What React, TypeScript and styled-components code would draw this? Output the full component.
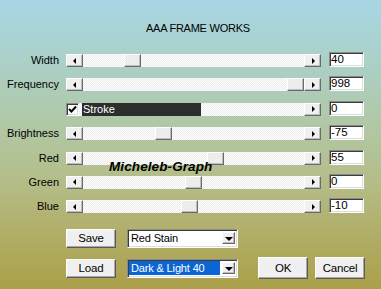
import React from "react";
import styled, { createGlobalStyle, css } from "styled-components";

const GlobalStyle = createGlobalStyle`
  html, body { margin: 0; padding: 0; }
  body { font-family: "Liberation Sans", Arial, sans-serif; background: #aba04a; }
`;

const FONT = `"Liberation Sans", Arial, sans-serif`;

const raised = css`
  box-sizing: border-box;
  border: 1px solid;
  border-color: #ffffff #6a6a6a #6a6a6a #ffffff;
  box-shadow: inset -1px -1px #bdbdbd;
`;

const sunken = css`
  box-sizing: border-box;
  border: 1px solid;
  border-color: #8a8a8a #ffffff #ffffff #8a8a8a;
  box-shadow: inset 1px 1px #3c3c3c, inset -1px -1px #dcdcdc;
  background: #ffffff;
`;

const Dialog = styled.div`
  position: relative;
  width: 381px;
  height: 289px;
  box-sizing: border-box;
  padding-top: 22px;
  overflow: hidden;
  font-family: ${FONT};
  color: #000;
  background: linear-gradient(
    to bottom,
    #a8d6e4 0%,
    #abd0c6 22%,
    #b1c7a3 45%,
    #b4bc86 64%,
    #b1ad66 82%,
    #aba04a 100%
  );
`;

const Title = styled.div`
  height: 13px;
  line-height: 13px;
  font-size: 11px;
  letter-spacing: -0.25px;
  padding-left: 146px;
  white-space: nowrap;
`;

const Rows = styled.div`
  margin-top: 17px;
  display: grid;
  grid-template-columns: 66px 255px 43px;
  grid-auto-rows: 24.4px;
  align-items: start;
`;

const Label = styled.div`
  margin-top: 2px;
  height: 13px;
  line-height: 13px;
  font-size: 11px;
  text-align: right;
  padding-right: 7px;
  white-space: nowrap;
`;

const SliderBar = styled.div`
  margin-top: 2px;
  height: 13px;
  display: flex;
  background-color: #ffffff;
  background-image: repeating-conic-gradient(#ebebeb 0 25%, #ffffff 0 50%);
  background-size: 2px 2px;
`;

const ArrowButton = styled.div`
  ${raised};
  width: 17px;
  height: 13px;
  flex: none;
  background: #f0f0f0;
  display: flex;
  align-items: center;
  justify-content: center;
`;

const Arrow = styled.span<{ $dir: "left" | "right" }>`
  width: 0;
  height: 0;
  border-top: 3px solid transparent;
  border-bottom: 3px solid transparent;
  ${(p) =>
    p.$dir === "left"
      ? css`border-right: 3px solid #000; margin-right: 1px;`
      : css`border-left: 3px solid #000; margin-left: 1px;`}
`;

const Track = styled.div`
  position: relative;
  flex: 1;
`;

const Thumb = styled.div`
  ${raised};
  position: absolute;
  top: 0;
  width: 17px;
  height: 13px;
  background: #ededed;
`;

const ValueBox = styled.div`
  ${sunken};
  margin-left: 8px;
  width: 35px;
  height: 15px;
  font-size: 11.5px;
  line-height: 13px;
  padding-left: 1px;
  white-space: nowrap;
`;

const CheckBox = styled.div`
  ${sunken};
  width: 13px;
  height: 13px;
  flex: none;
  display: flex;
  align-items: center;
  justify-content: center;
`;

const StrokeBar = styled.div`
  width: 119px;
  flex: none;
  margin-left: 3px;
  background: #2d2d2d;
  color: #ffffff;
  font-size: 11px;
  line-height: 13px;
  padding-left: 1px;
  box-sizing: border-box;
`;

const Watermark = styled.div`
  position: absolute;
  left: 109px;
  top: 160px;
  font-family: ${FONT};
  font-weight: 700;
  font-style: italic;
  font-size: 13.5px;
  line-height: 1;
  letter-spacing: 0.1px;
  color: #000;
  white-space: nowrap;
  pointer-events: none;
`;

const Bottom = styled.div`
  margin-top: 6.2px;
  padding-left: 66px;
  display: flex;
`;

const LeftGrid = styled.div`
  display: grid;
  grid-template-columns: 50px 111px;
  grid-template-rows: 19px 19px;
  column-gap: 11px;
  row-gap: 11px;
`;

const Actions = styled.div`
  display: flex;
  gap: 7px;
  margin-left: 20px;
  align-self: flex-end;
  margin-bottom: -1px;
`;

const PushButton = styled.button<{ $h: number }>`
  width: 50px;
  height: ${(p) => p.$h}px;
  margin: 0;
  padding: 0;
  box-sizing: border-box;
  font-family: ${FONT};
  font-size: 11.5px;
  letter-spacing: -0.2px;
  color: #000;
  background: #f0f0f0;
  border: 1px solid;
  border-color: #ffffff #5a5a5a #5a5a5a #ffffff;
  box-shadow: inset -1px -1px #a8a8a8;
  cursor: default;
`;

const Combo = styled.div`
  ${sunken};
  width: 111px;
  height: 19px;
  padding: 0 2px 0 1px;
  display: flex;
  align-items: center;
  gap: 2px;
`;

const ComboText = styled.div<{ $selected?: boolean }>`
  flex: 1;
  height: 14px;
  line-height: 14px;
  font-size: 11px;
  letter-spacing: -0.15px;
  padding-left: 2px;
  white-space: nowrap;
  overflow: hidden;
  background: ${(p) => (p.$selected ? "#0b66d4" : "transparent")};
  color: ${(p) => (p.$selected ? "#ffffff" : "#000000")};
`;

const DropButton = styled.div`
  ${raised};
  width: 13px;
  height: 12px;
  flex: none;
  background: #f0f0f0;
  display: flex;
  align-items: center;
  justify-content: center;
`;

const DownArrow = styled.span`
  width: 0;
  height: 0;
  border-left: 4px solid transparent;
  border-right: 4px solid transparent;
  border-top: 4px solid #000;
  margin-top: 1px;
`;

const INNER = 255 - 34 - 17;

function Slider({ value, min, max }: { value: number; min: number; max: number }) {
  const left = Math.round(((value - min) / (max - min)) * INNER);
  return (
    <SliderBar>
      <ArrowButton>
        <Arrow $dir="left" />
      </ArrowButton>
      <Track>
        <Thumb style={{ left }} />
      </Track>
      <ArrowButton>
        <Arrow $dir="right" />
      </ArrowButton>
    </SliderBar>
  );
}

function CheckMark() {
  return (
    <svg width="9" height="9" viewBox="0 0 9 9">
      <polyline points="1,4 3.5,6.5 8,1.5" fill="none" stroke="#000" strokeWidth="2" />
    </svg>
  );
}

const rows = [
  { label: "Width", value: 40, min: 0, max: 200 },
  { label: "Frequency", value: 998, min: 0, max: 1000 },
  { label: "Stroke", value: 0, min: 0, max: 1, check: true },
  { label: "Brightness", value: -75, min: -255, max: 255 },
  { label: "Red", value: 55, min: -255, max: 255 },
  { label: "Green", value: 0, min: -255, max: 255 },
  { label: "Blue", value: -10, min: -255, max: 255 },
];

export default function App() {
  return (
    <>
      <GlobalStyle />
      <Dialog>
        <Title>AAA FRAME WORKS</Title>
        <Rows>
          {rows.map((r) => (
            <React.Fragment key={r.label}>
              <Label>{r.check ? "" : r.label}</Label>
              {r.check ? (
                <SliderBar>
                  <CheckBox>
                    <CheckMark />
                  </CheckBox>
                  <StrokeBar>{r.label}</StrokeBar>
                  <Track />
                  <ArrowButton>
                    <Arrow $dir="right" />
                  </ArrowButton>
                </SliderBar>
              ) : (
                <Slider value={r.value} min={r.min} max={r.max} />
              )}
              <ValueBox>{r.value}</ValueBox>
            </React.Fragment>
          ))}
        </Rows>
        <Bottom>
          <LeftGrid>
            <PushButton $h={19}>Save</PushButton>
            <Combo>
              <ComboText>Red Stain</ComboText>
              <DropButton>
                <DownArrow />
              </DropButton>
            </Combo>
            <PushButton $h={19}>Load</PushButton>
            <Combo>
              <ComboText $selected>Dark &amp; Light 40</ComboText>
              <DropButton>
                <DownArrow />
              </DropButton>
            </Combo>
          </LeftGrid>
          <Actions>
            <PushButton $h={22}>OK</PushButton>
            <PushButton $h={22}>Cancel</PushButton>
          </Actions>
        </Bottom>
        <Watermark>Micheleb-Graph</Watermark>
      </Dialog>
    </>
  );
}
